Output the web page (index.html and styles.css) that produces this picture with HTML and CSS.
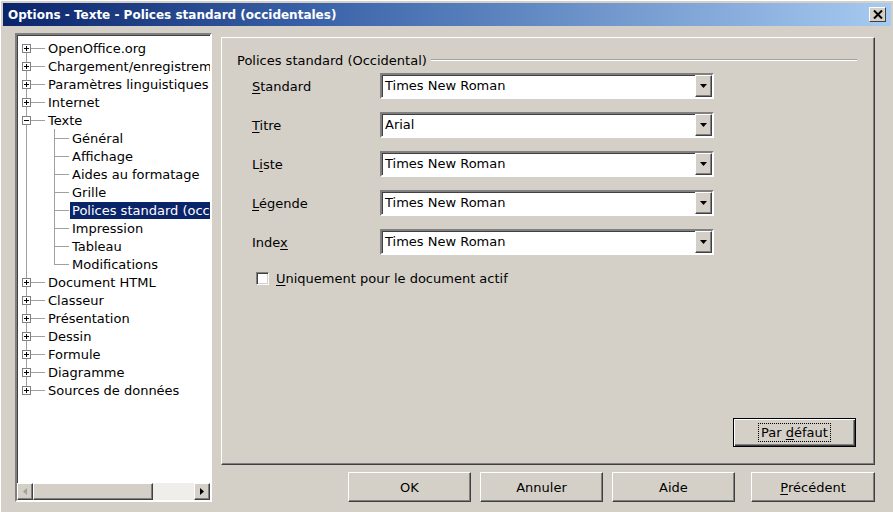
FILE: index.html
```html
<!doctype html>
<html lang="fr">
<head>
    <meta charset="UTF-8">
    <title>Options - Texte - Polices standard (occidentales)</title>
    <link rel="stylesheet" href="styles.css">
</head>
<body>
    <div class="window">
        <div class="titlebar">
            <span class="title">Options - Texte - Polices standard (occidentales)</span>
            <span class="close">
                <svg width="10" height="9" viewBox="0 0 10 9"><path d="M1 0.5 L9 8.5 M9 0.5 L1 8.5" stroke="#000" stroke-width="2"/></svg>
            </span>
        </div>

        <div class="content">
            <!-- left tree -->
            <div class="tree-panel">
                <div class="tree">
                    <div class="row"><span class="branch top first"><svg class="box" width="9" height="9"><rect x="0.5" y="0.5" width="8" height="8" fill="#fff" stroke="#808080"/><path d="M2 4.5h5M4.5 2v5" stroke="#000"/></svg></span><span class="label">OpenOffice.org</span></div>
                    <div class="row"><span class="branch top"><svg class="box" width="9" height="9"><rect x="0.5" y="0.5" width="8" height="8" fill="#fff" stroke="#808080"/><path d="M2 4.5h5M4.5 2v5" stroke="#000"/></svg></span><span class="label">Chargement/enregistrement</span></div>
                    <div class="row"><span class="branch top"><svg class="box" width="9" height="9"><rect x="0.5" y="0.5" width="8" height="8" fill="#fff" stroke="#808080"/><path d="M2 4.5h5M4.5 2v5" stroke="#000"/></svg></span><span class="label">Paramètres linguistiques</span></div>
                    <div class="row"><span class="branch top"><svg class="box" width="9" height="9"><rect x="0.5" y="0.5" width="8" height="8" fill="#fff" stroke="#808080"/><path d="M2 4.5h5M4.5 2v5" stroke="#000"/></svg></span><span class="label">Internet</span></div>
                    <div class="row"><span class="branch top open"><svg class="box" width="9" height="9"><rect x="0.5" y="0.5" width="8" height="8" fill="#fff" stroke="#808080"/><path d="M2 4.5h5" stroke="#000"/></svg></span><span class="label">Texte</span></div>
                    <div class="row"><span class="branch child"></span><span class="label">Général</span></div>
                    <div class="row"><span class="branch child"></span><span class="label">Affichage</span></div>
                    <div class="row"><span class="branch child"></span><span class="label">Aides au formatage</span></div>
                    <div class="row"><span class="branch child"></span><span class="label">Grille</span></div>
                    <div class="row"><span class="branch child"></span><span class="label selected">Polices standard (occidentales)</span></div>
                    <div class="row"><span class="branch child"></span><span class="label">Impression</span></div>
                    <div class="row"><span class="branch child"></span><span class="label">Tableau</span></div>
                    <div class="row"><span class="branch child last-child"></span><span class="label">Modifications</span></div>
                    <div class="row"><span class="branch top"><svg class="box" width="9" height="9"><rect x="0.5" y="0.5" width="8" height="8" fill="#fff" stroke="#808080"/><path d="M2 4.5h5M4.5 2v5" stroke="#000"/></svg></span><span class="label">Document HTML</span></div>
                    <div class="row"><span class="branch top"><svg class="box" width="9" height="9"><rect x="0.5" y="0.5" width="8" height="8" fill="#fff" stroke="#808080"/><path d="M2 4.5h5M4.5 2v5" stroke="#000"/></svg></span><span class="label">Classeur</span></div>
                    <div class="row"><span class="branch top"><svg class="box" width="9" height="9"><rect x="0.5" y="0.5" width="8" height="8" fill="#fff" stroke="#808080"/><path d="M2 4.5h5M4.5 2v5" stroke="#000"/></svg></span><span class="label">Présentation</span></div>
                    <div class="row"><span class="branch top"><svg class="box" width="9" height="9"><rect x="0.5" y="0.5" width="8" height="8" fill="#fff" stroke="#808080"/><path d="M2 4.5h5M4.5 2v5" stroke="#000"/></svg></span><span class="label">Dessin</span></div>
                    <div class="row"><span class="branch top"><svg class="box" width="9" height="9"><rect x="0.5" y="0.5" width="8" height="8" fill="#fff" stroke="#808080"/><path d="M2 4.5h5M4.5 2v5" stroke="#000"/></svg></span><span class="label">Formule</span></div>
                    <div class="row"><span class="branch top"><svg class="box" width="9" height="9"><rect x="0.5" y="0.5" width="8" height="8" fill="#fff" stroke="#808080"/><path d="M2 4.5h5M4.5 2v5" stroke="#000"/></svg></span><span class="label">Diagramme</span></div>
                    <div class="row"><span class="branch top last"><svg class="box" width="9" height="9"><rect x="0.5" y="0.5" width="8" height="8" fill="#fff" stroke="#808080"/><path d="M2 4.5h5M4.5 2v5" stroke="#000"/></svg></span><span class="label">Sources de données</span></div>
                </div>

                <div class="hscroll">
                    <span class="sb-btn"><svg width="4" height="7"><path d="M4 0 L0 3.5 L4 7 Z" fill="#a0a0a0"/></svg></span>
                    <span class="sb-thumb"></span>
                    <span class="sb-track"></span>
                    <span class="sb-btn"><svg width="4" height="7"><path d="M0 0 L4 3.5 L0 7 Z" fill="#000"/></svg></span>
                </div>
            </div>

            <!-- right side -->
            <div class="main">
                <div class="page">
                    <div class="group-title">
                        <span>Polices standard (Occidental)</span>
                        <span class="rule"></span>
                    </div>

                    <div class="field first">
                        <span class="field-label"><u>S</u>tandard</span>
                        <span class="combo"><span class="combo-text">Times New Roman</span><span class="combo-btn"><svg width="7" height="4"><path d="M0 0 H7 L3.5 4 Z" fill="#000"/></svg></span></span>
                    </div>
                    <div class="field">
                        <span class="field-label"><u>T</u>itre</span>
                        <span class="combo"><span class="combo-text">Arial</span><span class="combo-btn"><svg width="7" height="4"><path d="M0 0 H7 L3.5 4 Z" fill="#000"/></svg></span></span>
                    </div>
                    <div class="field">
                        <span class="field-label">L<u>i</u>ste</span>
                        <span class="combo"><span class="combo-text">Times New Roman</span><span class="combo-btn"><svg width="7" height="4"><path d="M0 0 H7 L3.5 4 Z" fill="#000"/></svg></span></span>
                    </div>
                    <div class="field">
                        <span class="field-label"><u>L</u>égende</span>
                        <span class="combo"><span class="combo-text">Times New Roman</span><span class="combo-btn"><svg width="7" height="4"><path d="M0 0 H7 L3.5 4 Z" fill="#000"/></svg></span></span>
                    </div>
                    <div class="field">
                        <span class="field-label">Inde<u>x</u></span>
                        <span class="combo"><span class="combo-text">Times New Roman</span><span class="combo-btn"><svg width="7" height="4"><path d="M0 0 H7 L3.5 4 Z" fill="#000"/></svg></span></span>
                    </div>

                    <div class="check-row">
                        <span class="checkbox"></span>
                        <span><u>U</u>niquement pour le document actif</span>
                    </div>

                    <div class="page-foot">
                        <span class="btn default"><span class="focus">Par <u>d</u>éfaut</span></span>
                    </div>
                </div>

                <div class="buttons">
                    <span class="btn">OK</span>
                    <span class="btn">Annuler</span>
                    <span class="btn">Aide</span>
                    <span class="btn back"><u>P</u>récédent</span>
                </div>
            </div>
        </div>
    </div>
</body>
</html>
```

FILE: styles.css
```css
body {
    margin: 0;
    width: 893px;
    height: 512px;
    overflow: hidden;
    background-color: #d4d0c8;
    font-family: 'DejaVu Sans', sans-serif;
    font-size: 13px;
    color: #000;
}

u {
    text-decoration: underline;
    text-underline-offset: 2px;
}

.window {
    height: 510px;
    padding: 2px 2px 0 2px;
    border-top: 1px solid #fff;
    border-left: 1px solid #fff;
    box-sizing: border-box;
    height: 512px;
}

/* title bar */
.titlebar {
    height: 23px;
    display: flex;
    align-items: center;
    justify-content: space-between;
    padding: 0 5px;
    background: linear-gradient(to right, #0a246a, #3a62a8 35%, #a6caf0);
    color: #fff;
    font-weight: bold;
    font-size: 12px;
}

.close {
    width: 16px;
    height: 14px;
    display: flex;
    align-items: center;
    justify-content: center;
    background-color: #d4d0c8;
    border-top: 1px solid #fff;
    border-left: 1px solid #fff;
    border-right: 1px solid #404040;
    border-bottom: 1px solid #404040;
    box-sizing: border-box;
    width: 17px;
    height: 15px;
}

.content {
    display: flex;
    gap: 9px;
    padding: 7px 16px 0 12px;
}

/* tree panel */
.tree-panel {
    width: 197px;
    height: 469px;
    display: flex;
    flex-direction: column;
    background-color: #fff;
    border-top: 2px solid #808080;
    border-left: 2px solid #808080;
    border-right: 2px solid #fff;
    border-bottom: 2px solid #fff;
    box-shadow: inset 1px 1px 0 #404040;
    box-sizing: border-box;
}

.tree {
    flex: 1;
    overflow: hidden;
    padding-top: 4px;
}

.row {
    display: flex;
    align-items: center;
    height: 18px;
    white-space: nowrap;
}

.branch {
    flex: none;
    height: 18px;
    display: flex;
    align-items: center;
    background-repeat: no-repeat;
}

.branch.top {
    width: 29px;
    background-image: linear-gradient(#a0a0a0, #a0a0a0), linear-gradient(#a0a0a0, #a0a0a0);
    background-position: 9px 0, 14px 9px;
    background-size: 1px 100%, 14px 1px;
}

.branch.top.first {
    background-position: 9px 9px, 14px 9px;
    background-size: 1px 9px, 14px 1px;
}

.branch.top.last {
    background-size: 1px 9px, 14px 1px;
}

.branch.top.open {
    background-image: linear-gradient(#a0a0a0, #a0a0a0), linear-gradient(#a0a0a0, #a0a0a0), linear-gradient(#a0a0a0, #a0a0a0);
    background-position: 9px 0, 14px 9px, 37px 15px;
    background-size: 1px 100%, 14px 1px, 1px 3px;
}

.box {
    margin-left: 5px;
    display: block;
}

.branch.child {
    width: 53px;
    background-image: linear-gradient(#a0a0a0, #a0a0a0), linear-gradient(#a0a0a0, #a0a0a0), linear-gradient(#a0a0a0, #a0a0a0);
    background-position: 9px 0, 37px 0, 37px 9px;
    background-size: 1px 100%, 1px 100%, 15px 1px;
}

.branch.child.last-child {
    background-size: 1px 100%, 1px 10px, 15px 1px;
}

.label {
    padding: 0 2px;
    line-height: 17px;
}

.label.selected {
    background-color: #0a246a;
    color: #fff;
}

/* horizontal scrollbar */
.hscroll {
    height: 17px;
    display: flex;
    flex: none;
}

.sb-btn {
    width: 16px;
    display: flex;
    align-items: center;
    justify-content: center;
    background-color: #d4d0c8;
    border-top: 1px solid #fff;
    border-left: 1px solid #fff;
    border-right: 1px solid #404040;
    border-bottom: 1px solid #404040;
    box-shadow: inset -1px -1px 0 #808080;
    box-sizing: border-box;
}

.sb-thumb {
    width: 120px;
    background-color: #d4d0c8;
    border-top: 1px solid #fff;
    border-left: 1px solid #fff;
    border-right: 1px solid #404040;
    border-bottom: 1px solid #404040;
    box-shadow: inset -1px -1px 0 #808080;
    box-sizing: border-box;
}

.sb-track {
    flex: 1;
    background-color: #efeeeb;
}

/* right side */
.main {
    flex: 1;
    padding-top: 4px;
    display: flex;
    flex-direction: column;
}

.page {
    height: 428px;
    display: flex;
    flex-direction: column;
    padding: 14px 17px 17px 14px;
    border-top: 1px solid #fff;
    border-left: 1px solid #fff;
    border-right: 1px solid #404040;
    border-bottom: 1px solid #404040;
    box-shadow: inset -1px -1px 0 #808080;
    box-sizing: border-box;
}

.group-title {
    display: flex;
    align-items: center;
    height: 16px;
    padding-left: 1px;
}

.rule {
    flex: 1;
    margin-left: 4px;
    border-top: 1px solid #a0a0a0;
    border-bottom: 1px solid #fff;
}

.field {
    display: flex;
    align-items: center;
    margin-top: 13px;
    padding-left: 16px;
}

.field.first {
    margin-top: 5px;
}

.field-label {
    width: 128px;
}

.combo {
    width: 334px;
    height: 26px;
    display: flex;
    background-color: #fff;
    border-top: 2px solid #808080;
    border-left: 2px solid #808080;
    border-right: 2px solid #fff;
    border-bottom: 2px solid #fff;
    box-shadow: inset 1px 1px 0 #404040, 1px 1px 0 #d4d0c8;
    box-sizing: border-box;
}

.combo-text {
    flex: 1;
    padding-left: 3px;
    line-height: 22px;
}

.combo-btn {
    width: 17px;
    display: flex;
    align-items: center;
    justify-content: center;
    background-color: #d4d0c8;
    border-top: 1px solid #fff;
    border-left: 1px solid #fff;
    border-right: 1px solid #404040;
    border-bottom: 1px solid #404040;
    box-shadow: inset -1px -1px 0 #808080;
    box-sizing: border-box;
}

.check-row {
    display: flex;
    align-items: center;
    gap: 7px;
    margin-top: 15px;
    padding-left: 20px;
    height: 16px;
}

.checkbox {
    width: 13px;
    height: 13px;
    background-color: #fff;
    border-top: 1px solid #808080;
    border-left: 1px solid #808080;
    border-right: 1px solid #fff;
    border-bottom: 1px solid #fff;
    box-shadow: inset 1px 1px 0 #404040, inset -1px -1px 0 #d4d0c8;
    box-sizing: border-box;
}

.page-foot {
    margin-top: auto;
    display: flex;
    justify-content: flex-end;
    padding-right: 1px;
}

/* buttons */
.btn {
    width: 123px;
    height: 30px;
    display: flex;
    align-items: center;
    justify-content: center;
    background-color: #d4d0c8;
    border-top: 1px solid #fff;
    border-left: 1px solid #fff;
    border-right: 1px solid #404040;
    border-bottom: 1px solid #404040;
    box-shadow: inset -1px -1px 0 #808080;
    box-sizing: border-box;
}

.btn.default {
    height: 29px;
    border: 1px solid #000;
    box-shadow: inset 1px 1px 0 #fff, inset -1px -1px 0 #404040, inset -2px -2px 0 #808080;
}

.focus {
    padding: 1px 2px;
    border: 1px dotted #000;
}

.buttons {
    display: flex;
    justify-content: flex-end;
    gap: 9px;
    margin-top: 7px;
}

.btn.back {
    width: 124px;
    margin-left: 7px;
}
```
